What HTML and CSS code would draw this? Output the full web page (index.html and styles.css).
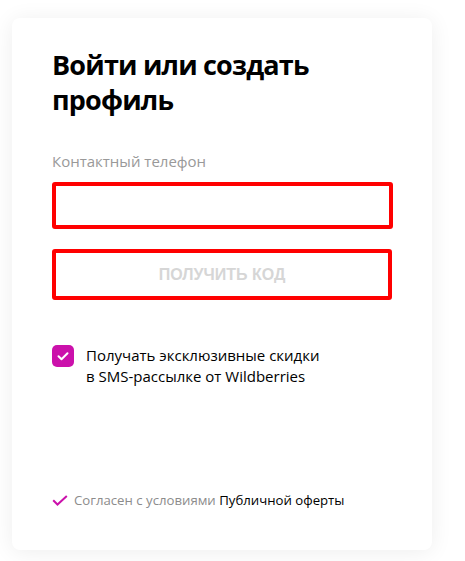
FILE: index.html
```html
<!DOCTYPE html>
<html lang="ru">
<head>
<meta charset="utf-8">
<title>Вход</title>
<link rel="stylesheet" href="styles.css">
</head>
<body>
<div class="page">
  <form class="card">
    <h1 class="title">Войти или создать профиль</h1>
    <label class="field-label" for="phone">Контактный телефон</label>
    <input class="phone-input" id="phone" type="tel">
    <button class="code-btn" type="button">ПОЛУЧИТЬ КОД</button>
    <label class="promo">
      <span class="checkbox">
        <svg viewBox="0 0 22 22" width="22" height="22"><path d="M6.5 11.2l3 3 6-6" fill="none" stroke="#fff" stroke-width="2" stroke-linecap="round" stroke-linejoin="round"/></svg>
      </span>
      <span class="promo-text">Получать эксклюзивные скидки<br>в SMS-рассылке от Wildberries</span>
    </label>
    <p class="agree">
      <svg class="agree-check" viewBox="0 0 16 11" width="16" height="11"><path d="M1.2 5.2l4.3 4.3L14.8 1" fill="none" stroke="#cb11ab" stroke-width="2"/></svg>
      <span class="agree-gray">Согласен с условиями</span>&nbsp;<span class="agree-link">Публичной оферты</span>
    </p>
  </form>
</div>
</body>
</html>
```
FILE: styles.css
```css
html, body {
  margin: 0;
  background: #fff;
}
body {
  font-family: "Open Sans", "Noto Sans", sans-serif;
  color: #000;
}
.page {
  padding: 18px 33px 11px 12px;
}
.card {
  box-sizing: border-box;
  width: 420px;
  height: 532px;
  background: #fff;
  border-radius: 8px;
  box-shadow: 0 2px 22px rgba(0, 0, 0, 0.07);
  padding: 29px 40px 41px;
  display: flex;
  flex-direction: column;
  align-items: flex-start;
}
.title {
  margin: 0;
  font-size: 27px;
  line-height: 35px;
  font-weight: 700;
  letter-spacing: -0.8px;
  width: 300px;
}
.field-label {
  margin-top: 34px;
  font-size: 15px;
  line-height: 20px;
  color: #999;
}
.phone-input {
  box-sizing: border-box;
  margin: 11px 0 0;
  width: 341px;
  height: 47px;
  border: 4px solid #ff0000;
  border-radius: 3px;
  outline: none;
  background: #fff;
}
.code-btn {
  box-sizing: border-box;
  margin-top: 20px;
  width: 340px;
  height: 51px;
  border: 4px solid #ff0000;
  border-radius: 3px;
  background: #fff;
  color: #d6d6d6;
  font-family: "Liberation Sans", Arial, sans-serif;
  font-weight: 700;
  font-size: 16px;
  padding: 0;
}
.promo {
  margin-top: 45px;
  display: flex;
  align-items: flex-start;
  gap: 12px;
}
.checkbox {
  flex: none;
  width: 22px;
  height: 22px;
  border-radius: 5px;
  background: #cb11ab;
  display: block;
}
.checkbox svg {
  display: block;
}
.promo-text {
  font-size: 15px;
  line-height: 21px;
  color: #000;
}
.agree {
  margin: auto 0 0;
  display: flex;
  align-items: center;
  font-size: 13.2px;
  line-height: 18px;
}
.agree-check {
  display: block;
  margin-right: 6px;
}
.agree-gray {
  color: #8c8c8c;
}
.agree-link {
  color: #000;
}
```
